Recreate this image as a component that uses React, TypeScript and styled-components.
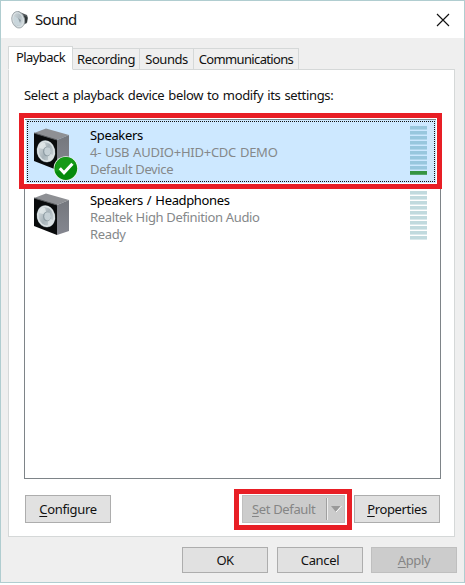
import React from 'react';
import styled, { createGlobalStyle } from 'styled-components';

const GlobalStyle = createGlobalStyle`
  * { box-sizing: border-box; }
  body { margin: 0; background: #fff; font-family: "Noto Sans", "Open Sans", sans-serif; font-size: 13px; color: #111; }
`;

const Dialog = styled.main`
  width: 465px;
  height: 583px;
  display: flex;
  flex-direction: column;
  background: #efefef;
  border: 1px solid #b0cdd0;
`;

const TitleBar = styled.header`
  height: 37px;
  flex: none;
  display: flex;
  align-items: center;
  padding: 0 14px 0 10px;
  background: #fff;
`;

const Title = styled.h1`
  flex: 1;
  margin: 0 0 2px 6px;
  font-size: 15px;
  font-weight: 400;
  line-height: 20px;
`;

const CloseButton = styled.button`
  display: flex;
  padding: 0;
  border: 0;
  background: none;
`;

const Label = styled.span<{ $spacing?: number; $word?: number }>`
  white-space: pre;
  letter-spacing: ${(p) => p.$spacing ?? -0.35}px;
  word-spacing: ${(p) => p.$word ?? 0}px;
  u { text-decoration-thickness: 1px; text-underline-offset: 2px; text-decoration-skip-ink: none; }
`;

const Tabs = styled.nav`
  height: 32px;
  margin: 0 0 -1px 7px;
  flex: none;
  display: flex;
  align-items: flex-end;
  z-index: 1;
`;

const Tab = styled.button<{ $width: number; $active?: boolean }>`
  width: ${(p) => p.$width}px;
  height: ${(p) => (p.$active ? 24 : 22)}px;
  padding: 0 0 ${(p) => (p.$active ? 2 : 0)}px;
  display: flex;
  align-items: center;
  justify-content: center;
  border: 1px solid #d5d8d8;
  border-left-width: ${(p) => (p.$active ? 1 : 0)}px;
  border-bottom-color: ${(p) => (p.$active ? '#fff' : '#d5d8d8')};
  background: ${(p) => (p.$active ? '#fff' : '#efefef')};
  color: inherit;
  font: inherit;
`;

const Panel = styled.section`
  width: 447px;
  height: 468px;
  flex: none;
  margin-left: 7px;
  padding: 15px 13px 0 15px;
  display: flex;
  flex-direction: column;
  border: 1px solid #d5d8d8;
  background: #fff;
`;

const Prompt = styled.p`
  margin: 0 0 14px;
  height: 20px;
  line-height: 20px;
`;

const DeviceList = styled.div`
  width: 417px;
  height: 360px;
  flex: none;
  border: 1px solid #7e8488;
`;

const Device = styled.article<{ $selected?: boolean }>`
  width: 410px;
  height: ${(p) => (p.$selected ? 63 : 64)}px;
  margin: ${(p) => (p.$selected ? '0 0 0 1px' : '3px 0 0 1px')};
  padding: ${(p) => (p.$selected ? 6 : 5)}px 9px 0 7px;
  display: flex;
  align-items: flex-start;
  background: ${(p) => (p.$selected ? '#cde8ff' : '#fff')};
`;

const FocusFrame = styled.div`
  position: absolute;
  left: 27px;
  top: 121px;
  width: 408px;
  height: 61px;
  border: 1px dotted #111;
`;

const DeviceText = styled.div`
  flex: 1;
  display: flex;
  flex-direction: column;
  padding: 1px 0 0 11px;
  color: #85888a;
  line-height: 17px;
`;

const DeviceName = styled.div`
  color: #000;
`;

const Meter = styled.div`
  display: flex;
  flex-direction: column;
  gap: 1px;
`;

const Bar = styled.i<{ $color: string; $edge: string }>`
  width: 17px;
  height: 4px;
  background: ${(p) => p.$color};
  border-bottom: 1px solid ${(p) => p.$edge};
`;

const PanelActions = styled.div`
  display: flex;
  align-items: flex-start;
  padding: 16px 0 0 1px;
`;

const Button = styled.button<{ $height: number; $disabled?: boolean }>`
  width: 86px;
  height: ${(p) => p.$height}px;
  padding: 0 0 1px;
  display: flex;
  align-items: center;
  justify-content: center;
  border: 1px solid ${(p) => (p.$disabled ? '#bfbfbf' : '#adadad')};
  background: ${(p) => (p.$disabled ? '#cccccc' : '#e1e1e1')};
  color: ${(p) => (p.$disabled ? '#858585' : 'inherit')};
  font: inherit;
`;

const SplitButton = styled(Button)`
  width: 103px;
  margin: 0 9px 0 131px;
  justify-content: space-between;
  padding-left: 9px;
`;

const DropArrow = styled.span`
  height: 22px;
  width: 18px;
  display: flex;
  align-items: center;
  justify-content: center;
  border-left: 1px solid #a0a0a0;
  box-shadow: inset 1px 0 #eee;
`;

const Footer = styled.footer`
  display: flex;
  justify-content: flex-end;
  gap: 9px;
  padding: 10px 7px 0 0;
  & > :last-child { margin-left: -1px; }
`;

const Highlight = styled.div<{ $x: number; $y: number; $w: number; $h: number }>`
  position: absolute;
  z-index: 2;
  left: ${(p) => p.$x}px;
  top: ${(p) => p.$y}px;
  width: ${(p) => p.$w}px;
  height: ${(p) => p.$h}px;
  border: 5px solid #e81e25;
  box-shadow: inset 0 0 0 1px #fff;
  pointer-events: none;
`;

function SoundIcon() {
  return (
    <svg width="18" height="20" viewBox="0 0 18 20">
      <defs>
        <linearGradient id="horn" x1="0" x2="1" y1="0" y2="1">
          <stop stopColor="#dce2e5" /><stop offset=".5" stopColor="#b3bec4" /><stop offset="1" stopColor="#e8eef0" />
        </linearGradient>
      </defs>
      <path d="M7 1L11 3L16 5L17 8L16 13L12 15L8 18Z" fill="#555b5e" />
      <path d="M12 5L16 7V12L12 14" fill="#303638" />
      <ellipse cx="7.2" cy="9.8" rx="6.3" ry="8.4" transform="rotate(-14 7 9.8)" fill="url(#horn)" stroke="#9aa2a6" strokeWidth=".8" />
      <ellipse cx="7.2" cy="9.8" rx="5.1" ry="7.1" transform="rotate(-14 7 9.8)" fill="none" stroke="#e1e7e9" strokeWidth=".7" />
      <path d="M3 6L8 9L10 15Q5 17 3 12Z" fill="#c9d6dc" />
      <path d="M7 8L10 10L9 13Z" fill="#8d9aa1" />
    </svg>
  );
}

function SpeakerIcon({ checked = false }: { checked?: boolean }) {
  const id = checked ? 'default' : 'normal';
  return (
    <svg width="46" height="57" viewBox="0 -2 46 57">
      <defs>
        <linearGradient id={`side-${id}`} x2="0" y2="1">
          <stop stopColor="#74777d" /><stop offset="1" stopColor="#858790" />
        </linearGradient>
        <linearGradient id={`cone-${id}`} x2="1" y2="1">
          <stop stopColor="#e3e8ea" /><stop offset=".5" stopColor="#a7b3b9" /><stop offset="1" stopColor="#d6dfe2" />
        </linearGradient>
      </defs>
      <path d="M1 5L13 .5L36 7L24 12Z" fill="#8e9094" />
      <path d="M24 12L36 7V38L24 42Z" fill={`url(#side-${id})`} />
      <path d="M1 5L24 12V42L1 33Z" fill="#090b0c" />
      <path d="M1 5L24 12" stroke="#55585b" fill="none" />
      <ellipse cx="13" cy="23.3" rx="9.3" ry="11.2" transform="rotate(-12 13 23.3)" fill="#59646a" />
      <ellipse cx="13" cy="23.3" rx="8.2" ry="10" transform="rotate(-12 13 23.3)" fill={`url(#cone-${id})`} stroke="#dce3e5" strokeWidth="1.6" />
      <path d="M6 20Q8 14 12 15L14 22Z" fill="#edf2f2" opacity=".65" />
      <path d="M15 25L20 27Q19 32 15 32Z" fill="#edf2f2" opacity=".55" />
      <ellipse cx="14" cy="23.5" rx="4" ry="4.8" fill="#8f9da4" />
      <ellipse cx="14.6" cy="23.3" rx="3.3" ry="4.1" fill="#c5d0d5" />
      {checked && (
        <g transform="translate(0 2.7)">
          <circle cx="32.8" cy="37.8" r="12.2" fill="#e7f4e7" />
          <circle cx="32.8" cy="37.8" r="11.4" fill="#078b0c" />
          <path d="M23 33A11 11 0 0 1 43 33Q35 40 22 41Z" fill="#169a17" />
          <path d="M26.8 37.5L31 42L39.4 33" fill="none" stroke="#fff" strokeWidth="3" />
        </g>
      )}
    </svg>
  );
}

function LevelMeter({ selected = false }: { selected?: boolean }) {
  return (
    <Meter>
      {Array.from({ length: 10 }, (_, index) => (
        <Bar
          key={index}
          $color={selected ? (index === 9 ? '#369542' : '#98c7de') : '#c1dade'}
          $edge={selected ? (index === 9 ? '#52a66b' : '#b0d6ec') : '#dae9ec'}
        />
      ))}
    </Meter>
  );
}

export default function App() {
  return (
    <>
      <GlobalStyle />
      <Dialog>
        <TitleBar>
          <SoundIcon />
          <Title><Label $spacing={-0.7}>Sound</Label></Title>
          <CloseButton aria-label="Close">
            <svg width="14" height="14" viewBox="0 0 14 14"><path d="M1 1L13 13M13 1L1 13" stroke="#111" strokeWidth="1.15" /></svg>
          </CloseButton>
        </TitleBar>
        <Tabs>
          <Tab $width={65} $active><Label $spacing={-0.55}>Playback</Label></Tab>
          <Tab $width={67}><Label $spacing={-0.45}>Recording</Label></Tab>
          <Tab $width={54}><Label $spacing={-0.45}>Sounds</Label></Tab>
          <Tab $width={105}><Label $spacing={-0.65}>Communications</Label></Tab>
        </Tabs>
        <Panel>
          <Prompt><Label $word={0.95}>Select a playback device below to modify its settings:</Label></Prompt>
          <DeviceList>
            <Device $selected>
              <SpeakerIcon checked />
              <DeviceText>
                <DeviceName><Label>Speakers</Label></DeviceName>
                <Label $spacing={-0.25} $word={0.7}>4- USB AUDIO+HID+CDC DEMO</Label>
                <Label>Default Device</Label>
              </DeviceText>
              <LevelMeter selected />
            </Device>
            <Device>
              <SpeakerIcon />
              <DeviceText>
                <DeviceName><Label $word={1}>Speakers / Headphones</Label></DeviceName>
                <Label>Realtek High Definition Audio</Label>
                <Label>Ready</Label>
              </DeviceText>
              <LevelMeter />
            </Device>
          </DeviceList>
          <PanelActions>
            <Button $height={28}><Label><u>C</u>onfigure</Label></Button>
            <SplitButton $height={28} $disabled>
              <Label><u>S</u>et Default</Label>
              <DropArrow><svg width="12" height="8" viewBox="0 0 12 8"><path d="M1 1H11L6 7Z" fill="#999" /><path d="M6 7L11.5 1" stroke="#fff" /></svg></DropArrow>
            </SplitButton>
            <Button $height={28}><Label><u>P</u>roperties</Label></Button>
          </PanelActions>
        </Panel>
        <Footer>
          <Button $height={26}><Label $spacing={-0.6}>OK</Label></Button>
          <Button $height={26}><Label>Cancel</Label></Button>
          <Button $height={26} $disabled><Label><u>A</u>pply</Label></Button>
        </Footer>
      </Dialog>
      <FocusFrame />
      <Highlight $x={19} $y={113} $w={423} $h={76} />
      <Highlight $x={234} $y={489} $w={118} $h={41} />
    </>
  );
}
